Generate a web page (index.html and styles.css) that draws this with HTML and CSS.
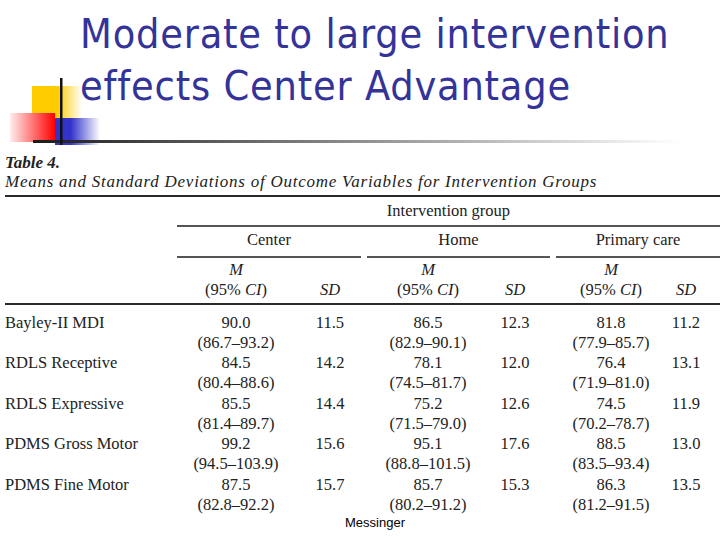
FILE: index.html
```html
<!DOCTYPE html>
<html lang="en">
<head>
<meta charset="utf-8">
<title>Moderate to large intervention effects Center Advantage</title>
<link rel="stylesheet" href="styles.css">
</head>
<body>
<div class="slide">
  <header class="head">
    <svg class="logo" width="720" height="152" viewBox="0 0 720 152" aria-hidden="true">
      <defs>
        <linearGradient id="gy" x1="0" y1="0" x2="1" y2="0">
          <stop offset="0" stop-color="#ffcc00" stop-opacity="1"/>
          <stop offset="0.5" stop-color="#ffcc00" stop-opacity="1"/>
          <stop offset="1" stop-color="#ffcc00" stop-opacity="0"/>
        </linearGradient>
        <linearGradient id="gr" x1="0" y1="0" x2="1" y2="0">
          <stop offset="0" stop-color="#ffeeee"/>
          <stop offset="1" stop-color="#ff0000"/>
        </linearGradient>
        <linearGradient id="gb" x1="0" y1="0" x2="1" y2="0">
          <stop offset="0" stop-color="#3333cc" stop-opacity="1"/>
          <stop offset="0.35" stop-color="#3333cc" stop-opacity="1"/>
          <stop offset="1" stop-color="#3333cc" stop-opacity="0"/>
        </linearGradient>
        <linearGradient id="gl" x1="0" y1="0" x2="1" y2="0">
          <stop offset="0" stop-color="#1a1a1a"/>
          <stop offset="0.1" stop-color="#333333"/>
          <stop offset="1" stop-color="#ffffff"/>
        </linearGradient>
      </defs>
      <rect x="32" y="86" width="50" height="34" fill="url(#gy)"/>
      <rect x="55" y="118" width="45" height="27" fill="url(#gb)"/>
      <rect x="10" y="113" width="45" height="29" fill="url(#gr)"/>
      <rect x="33" y="140" width="647" height="3" fill="url(#gl)"/>
      <rect x="60" y="78" width="2.5" height="67" fill="#111"/>
    </svg>
    <h1 class="title">Moderate to large intervention<br>effects Center Advantage</h1>
  </header>

  <section class="table">
    <div class="caption">
      <div class="cap-num">Table 4.</div>
      <div class="cap-desc">Means and Standard Deviations of Outcome Variables for Intervention Groups</div>
    </div>

    <div class="row hrow1">
      <div class="span-all">Intervention group</div>
    </div>
    <div class="row hrow2">
      <div class="grp grp-c">Center</div>
      <div class="grp grp-h">Home</div>
      <div class="grp grp-p">Primary care</div>
    </div>
    <div class="row hrow3">
      <div class="lbl"></div>
      <div class="m mc"><i>M</i><br>(95% <i>CI</i>)</div>
      <div class="sd sdc"><i>SD</i></div>
      <div class="gap"></div>
      <div class="m mh"><i>M</i><br>(95% <i>CI</i>)</div>
      <div class="sd sdh"><i>SD</i></div>
      <div class="gap"></div>
      <div class="m mp"><i>M</i><br>(95% <i>CI</i>)</div>
      <div class="sd sdp"><i>SD</i></div>
    </div>

    <div class="body">
      <div class="row drow">
        <div class="lbl">Bayley-II MDI</div>
        <div class="m mc">90.0<br>(86.7–93.2)</div>
        <div class="sd sdc">11.5</div>
        <div class="gap"></div>
        <div class="m mh">86.5<br>(82.9–90.1)</div>
        <div class="sd sdh">12.3</div>
        <div class="gap"></div>
        <div class="m mp">81.8<br>(77.9–85.7)</div>
        <div class="sd sdp">11.2</div>
      </div>
      <div class="row drow">
        <div class="lbl">RDLS Receptive</div>
        <div class="m mc">84.5<br>(80.4–88.6)</div>
        <div class="sd sdc">14.2</div>
        <div class="gap"></div>
        <div class="m mh">78.1<br>(74.5–81.7)</div>
        <div class="sd sdh">12.0</div>
        <div class="gap"></div>
        <div class="m mp">76.4<br>(71.9–81.0)</div>
        <div class="sd sdp">13.1</div>
      </div>
      <div class="row drow">
        <div class="lbl">RDLS Expressive</div>
        <div class="m mc">85.5<br>(81.4–89.7)</div>
        <div class="sd sdc">14.4</div>
        <div class="gap"></div>
        <div class="m mh">75.2<br>(71.5–79.0)</div>
        <div class="sd sdh">12.6</div>
        <div class="gap"></div>
        <div class="m mp">74.5<br>(70.2–78.7)</div>
        <div class="sd sdp">11.9</div>
      </div>
      <div class="row drow">
        <div class="lbl">PDMS Gross Motor</div>
        <div class="m mc">99.2<br>(94.5–103.9)</div>
        <div class="sd sdc">15.6</div>
        <div class="gap"></div>
        <div class="m mh">95.1<br>(88.8–101.5)</div>
        <div class="sd sdh">17.6</div>
        <div class="gap"></div>
        <div class="m mp">88.5<br>(83.5–93.4)</div>
        <div class="sd sdp">13.0</div>
      </div>
      <div class="row drow">
        <div class="lbl">PDMS Fine Motor</div>
        <div class="m mc">87.5<br>(82.8–92.2)</div>
        <div class="sd sdc">15.7</div>
        <div class="gap"></div>
        <div class="m mh">85.7<br>(80.2–91.2)</div>
        <div class="sd sdh">15.3</div>
        <div class="gap"></div>
        <div class="m mp">86.3<br>(81.2–91.5)</div>
        <div class="sd sdp">13.5</div>
      </div>
    </div>
  </section>

  <footer class="foot">Messinger</footer>
</div>
</body>
</html>
```

FILE: styles.css
```css
* { box-sizing: border-box; }

body {
  margin: 0;
  background: #ffffff;
}

.slide {
  width: 720px;
  height: 540px;
  overflow: hidden;
  background: #ffffff;
}

/* ---------- title area ---------- */
.head {
  position: relative;
  height: 152px;
}

.logo {
  position: absolute;
  left: 0;
  top: 0;
}

.title {
  position: relative;
  margin: 0;
  padding: 8px 0 0 80px;
  font-family: "DejaVu Sans Condensed", "DejaVu Sans", sans-serif;
  font-stretch: semi-condensed;
  font-weight: normal;
  font-size: 41px;
  line-height: 52px;
  letter-spacing: 0.8px;
  color: #333399;
}

/* ---------- table ---------- */
.table {
  margin-left: 5px;
  width: 715px;
  font-family: "Liberation Serif", "Times New Roman", serif;
  font-size: 16.5px;
  color: #222222;
}

.caption {
  padding: 1px 0 4px;
  line-height: 19px;
  font-style: italic;
  border-bottom: 2px solid #2a2a2a;
}

.cap-num {
  font-weight: bold;
  font-size: 17px;
}

.cap-desc {
  font-size: 17px;
  letter-spacing: 0.75px;
}

.row {
  display: grid;
  grid-template-columns: 172px 124px 60px 6px 122px 61px 6px 110px 54px;
  line-height: 20.25px;
}

.hrow1 .span-all {
  grid-column: 2 / 10;
  text-align: center;
  padding: 4px 0 4px;
  border-bottom: 2px solid #555555;
}

.hrow2 .grp {
  text-align: center;
  padding: 3px 0 5px;
  border-bottom: 2px solid #555555;
}

.grp-c { grid-column: 2 / 4; }
.grp-h { grid-column: 5 / 7; }
.grp-p { grid-column: 8 / 10; }

.hrow3 {
  line-height: 20px;
  border-bottom: 2px solid #2a2a2a;
}

.hrow3 > div {
  padding-top: 2px;
  padding-bottom: 3px;
}

.hrow3 .sd {
  padding-top: 22px;
}

.m, .sd {
  text-align: center;
}

.mc { padding-right: 6px; }
.sdc { padding-right: 2px; }
.sdh { padding-right: 9px; }
.sdp { padding-right: 14px; }

.body {
  padding-top: 8px;
}

.lbl {
  white-space: nowrap;
}

/* ---------- footer ---------- */
.foot {
  padding-left: 30px;
  text-align: center;
  font-family: "Liberation Sans", Arial, sans-serif;
  font-size: 13px;
  line-height: 15px;
  color: #000000;
}
```
